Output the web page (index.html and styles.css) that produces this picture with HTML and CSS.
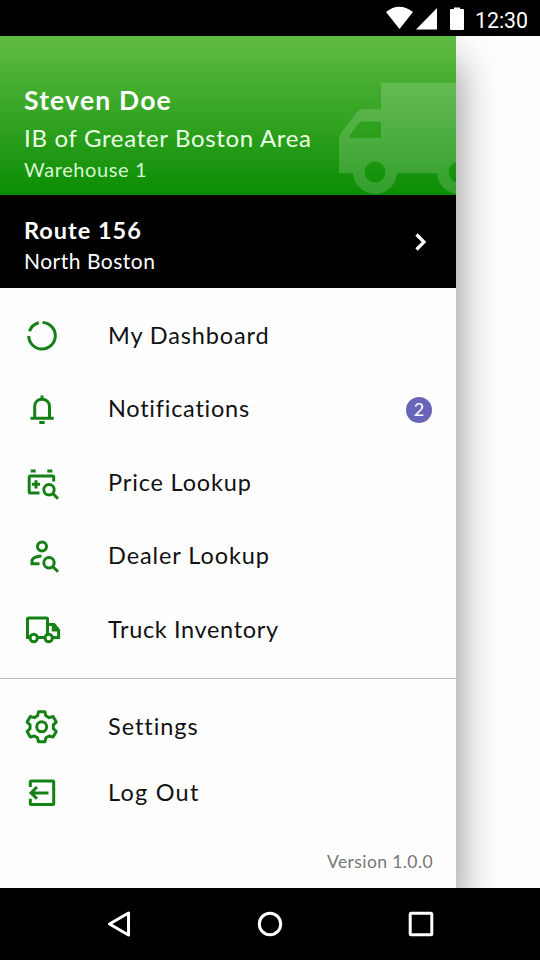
FILE: index.html
```html
<!DOCTYPE html>
<html lang="en">
<head>
<meta charset="utf-8">
<title>Route menu</title>
<link rel="stylesheet" href="styles.css">
</head>
<body>
<div class="phone">
  <header class="status">
    <svg class="status-icons" viewBox="0 0 80 24" fill="#fff">
      <path d="M0 6Q13-4.500 27 6L13.500 23Z"/>
      <path d="M51 2V23.500H30Z"/>
      <path d="M64 4Q64 3 65 3H68V1.500h6V3h3Q78 3 78 4V23Q78 24 77 24H65Q64 24 64 23Z"/>
    </svg>
    <span class="clock">12:30</span>
  </header>
  <main class="screen">
    <aside class="drawer">
      <section class="profile">
        <svg class="truck-art" viewBox="0 0 118 113">
          <mask id="holes">
            <rect width="118" height="113" fill="#fff"/>
            <path d="M24 39.500H43V55.700H10.500L20 42Q22 39.500 24 39.500Z"/>
            <circle cx="37" cy="90" r="10.500"/>
            <circle cx="121" cy="90" r="10.500"/>
          </mask>
          <g fill="#fff" mask="url(#holes)">
            <path d="M43 .7H118V91.300H1V56Q1 54 2 52.500L19 30Q21 27.300 24 27.300H43Z"/>
            <circle cx="37" cy="90" r="22"/>
            <circle cx="121" cy="90" r="22"/>
          </g>
        </svg>
        <div class="name">Steven Doe</div>
        <div class="area">IB of Greater Boston Area</div>
        <div class="warehouse">Warehouse 1</div>
      </section>
      <section class="route">
        <div>
          <div class="route-name">Route 156</div>
          <div class="route-place">North Boston</div>
        </div>
        <svg class="chevron" viewBox="0 0 14 20"><path d="M2.500 2.500 10 10 2.500 17.500"/></svg>
      </section>
      <nav class="menu">
        <a class="item">
          <svg class="icon" viewBox="0 0 36 36"><path d="M18.600 4.400A13.300 13.300 0 1 1 4.700 18M5.500 13.300A13.300 13.300 0 0 1 14.800 4.800"/></svg>
          <span class="t-dashboard">My Dashboard</span>
        </a>
        <a class="item">
          <svg class="icon" viewBox="0 0 36 36"><path d="M6.500 27.200H29.700M10.700 27V15.500C10.700 11 14 8.300 18 8.300S25.500 11 25.500 15.500V27M18 4.500V8M15.300 31.400H20.700"/></svg>
          <span class="t-notifications">Notifications</span>
          <b class="badge">2</b>
        </a>
        <a class="item">
          <svg class="icon" viewBox="0 0 36 36"><path d="M29.700 16.500V12Q29.700 11 28.700 11H6.200Q5.200 11 5.200 12V27Q5.200 28 6.200 28H15.500M6.700 6H11.700M23.300 6H28.300M12 15.200V23.400M7.900 19.300H16.100"/><circle cx="25" cy="24.700" r="5.200"/><path d="M28.700 28.400 34 33.700"/></svg>
          <span class="t-price">Price Lookup</span>
        </a>
        <a class="item">
          <svg class="icon" viewBox="0 0 36 36"><circle cx="18" cy="8.500" r="4.500"/><path d="M17.500 18C13 18.200 8 20 8 23V25.700H15.500"/><circle cx="25" cy="24.800" r="5.200"/><path d="M28.700 28.500 34 33.800"/></svg>
          <span class="t-dealer">Dealer Lookup</span>
        </a>
        <a class="item">
          <svg class="icon" viewBox="0 0 36 36"><path d="M5.500 25.500H3.500V7Q3.500 6 4.500 6H22.500Q23.500 6 23.500 7V22M14 25.500H20.500M23.500 12.500H30L34.600 18V25.500H29M29.300 13.500V18H34"/><circle cx="9.700" cy="26" r="3.700"/><circle cx="24.700" cy="26" r="3.700"/></svg>
          <span class="t-truck">Truck Inventory</span>
        </a>
      </nav>
      <nav class="menu secondary">
        <a class="item">
          <svg class="icon" viewBox="0 0 36 36"><g transform="translate(17.700 17.800)" stroke-linejoin="round"><path d="M-4.200-11-3.200-15H3.200L4.200-11 7.430-9.140 11.390-10.270 14.590-4.730 11.630-1.860V1.860L14.590 4.730 11.390 10.270 7.430 9.140 4.200 11 3.200 15H-3.200L-4.200 11-7.430 9.140-11.390 10.270-14.590 4.730-11.630 1.860V-1.860L-14.590-4.730-11.390-10.270-7.430-9.140Z"/><circle r="5"/></g></svg>
          <span class="t-settings">Settings</span>
        </a>
        <a class="item">
          <svg class="icon" viewBox="0 0 36 36"><path d="M6.300 12V7Q6.300 6 7.300 6H28.700Q29.700 6 29.700 7V28.600Q29.700 29.600 28.700 29.600H7.300Q6.300 29.600 6.300 28.600V23.800M24.500 17.900H7.500M13 12 7 17.900 13 23.800"/></svg>
          <span class="t-logout">Log Out</span>
        </a>
      </nav>
      <footer class="version">Version 1.0.0</footer>
    </aside>
  </main>
  <footer class="navbar">
    <svg viewBox="0 0 28 28"><path d="M4.500 14 23.500 3V25Z"/></svg>
    <svg viewBox="0 0 28 28"><circle cx="14" cy="14" r="10.700"/></svg>
    <svg viewBox="0 0 28 28"><rect x="3.200" y="3.200" width="21.600" height="21.600" rx="1"/></svg>
  </footer>
</div>
</body>
</html>
```
FILE: styles.css
```css
* {
  box-sizing: border-box;
}

body {
  margin: 0;
  font-family: Lato, "Liberation Sans", sans-serif;
  color: #111;
}

.phone {
  display: grid;
  grid-template-rows: 36px 852px 72px;
  width: 540px;
  height: 960px;
  overflow: hidden;
  background: #000;
}

.status {
  display: flex;
  justify-content: flex-end;
  align-items: center;
  gap: 9px;
  padding: 5px 12px 5px 0;
  color: #fff;
}

.status-icons {
  width: 80px;
  height: 24px;
}

.clock {
  font: 400 21.3px/26px Roboto, sans-serif;
  padding-top: 6px;
}

.screen {
  overflow: hidden;
  background: #fefefe;
}

.drawer {
  display: flex;
  flex-direction: column;
  width: 456px;
  height: 852px;
  background: #fefefe;
  box-shadow: 0 26px 40px rgba(0, 0, 0, 0.48);
}

.profile {
  position: relative;
  height: 159px;
  padding: 48px 24px 0;
  color: #fff;
  background: linear-gradient(#5fbc44, #0b8d03);
}

.truck-art {
  position: absolute;
  right: 0;
  bottom: 0;
  width: 118px;
  height: 113px;
  opacity: 0.16;
}

.name {
  font-size: 26.5px;
  font-weight: 700;
  line-height: 32px;
  letter-spacing: 1.2px;
}

.area {
  margin-top: 2px;
  font-size: 24px;
  line-height: 40px;
  letter-spacing: 0.68px;
  color: #eaffe6;
}

.warehouse {
  margin-top: -1px;
  font-size: 20px;
  line-height: 24px;
  letter-spacing: 0.6px;
  color: #d8f6d2;
}

.route {
  display: flex;
  justify-content: space-between;
  height: 93px;
  padding: 20px 28px 0 24px;
  color: #fff;
  background: #000;
}

.route-name {
  font-size: 23.5px;
  font-weight: 700;
  line-height: 30px;
  letter-spacing: 1px;
}

.route-place {
  margin-top: 1px;
  font-size: 21px;
  line-height: 30px;
  letter-spacing: 0.5px;
}

.chevron {
  width: 14px;
  height: 20px;
  margin-top: 17px;
  fill: none;
  stroke: #fff;
  stroke-width: 3.2;
}

.menu {
  height: 391px;
  padding: 11px 24px 0;
  border-bottom: 1px solid #bbb;
}

.item {
  display: flex;
  align-items: center;
  height: 73.5px;
  font-size: 23.5px;
}

.item span {
  padding: 0 0 2px 48px;
}

.secondary {
  height: 159px;
  padding-top: 15px;
  border: 0;
}

.secondary .item {
  height: 66px;
}

.icon {
  width: 36px;
  height: 36px;
  overflow: visible;
  fill: none;
  stroke: #158015;
  stroke-width: 3;
}

.badge {
  width: 26px;
  height: 26px;
  margin: 1px 0 0 auto;
  border-radius: 50%;
  background: #6864b8;
  color: #fff;
  font-size: 18px;
  font-weight: 400;
  line-height: 25px;
  text-align: center;
}

.t-dashboard { letter-spacing: 0.88px; }
.t-notifications { letter-spacing: 0.75px; }
.t-price { letter-spacing: 0.85px; }
.t-dealer { letter-spacing: 0.92px; }
.t-truck { letter-spacing: 0.65px; }
.t-settings { letter-spacing: 0.95px; }
.t-logout { letter-spacing: 1.25px; }

.version {
  padding-right: 23px;
  margin-top: 12px;
  font-size: 17.5px;
  line-height: 24px;
  letter-spacing: 0.4px;
  text-align: right;
  color: #777;
}

.navbar {
  display: flex;
  justify-content: space-between;
  align-items: center;
  padding: 0 105px;
}

.navbar svg {
  width: 28px;
  height: 28px;
  fill: none;
  stroke: #fff;
  stroke-width: 3;
  stroke-linejoin: round;
}
```
